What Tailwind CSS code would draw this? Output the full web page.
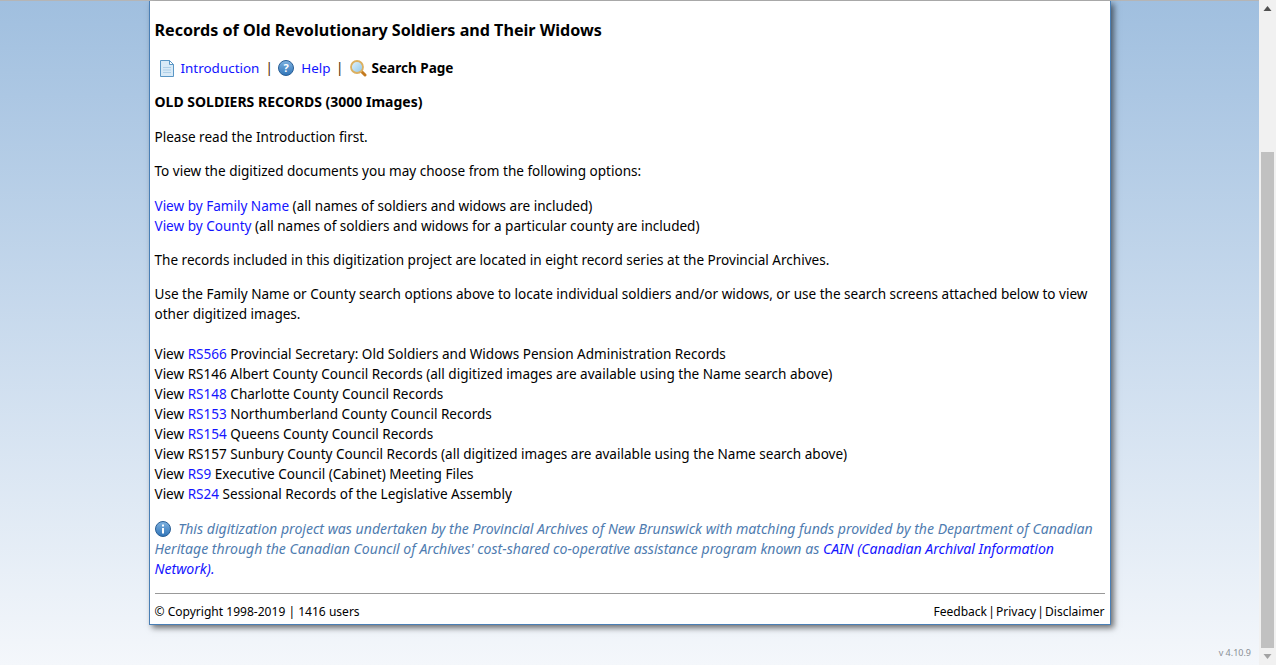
<!DOCTYPE html>
<html lang="en">
<head>
  <meta charset="UTF-8" />
  <title>Old Soldiers Records</title>
  <script src="https://cdn.jsdelivr.net/npm/@tailwindcss/browser@4"></script>
</head>
<body class="h-[665px] overflow-hidden flex bg-gradient-to-b from-[#a0bfdf] to-[#f4f7fb] font-['Noto_Sans',sans-serif] text-[13.56px] leading-5 text-black">
  <svg class="absolute w-0 h-0">
    <defs>
      <linearGradient id="ball" x1="0" y1="0" x2="0" y2="1">
        <stop offset="0" stop-color="#7fb2e0" />
        <stop offset="1" stop-color="#2f74b8" />
      </linearGradient>
      <linearGradient id="lens" x1="0" y1="0" x2="1" y2="1">
        <stop offset="0" stop-color="#e4f3fb" />
        <stop offset="1" stop-color="#8cc6ea" />
      </linearGradient>
    </defs>
  </svg>
  <main class="relative flex-1 flex justify-center items-start border-t border-[#b5b5b5]">
    <div class="w-[962px] h-[624px] bg-white border border-t-0 border-[#4a7fb5] shadow-[3px_3px_6px_rgba(0,0,0,0.55)] px-[5px]">
      <h1 class="mt-[19px] mb-[18px] text-[16.13px] leading-5 font-bold">Records of Old Revolutionary Soldiers and Their Widows</h1>

      <nav class="flex items-center h-5 mb-[14px] ml-[5px] text-[13.45px]">
        <svg class="w-[14px] h-[17px] mr-[7px]" viewBox="0 0 14 17">
          <path d="M.5 .5h9l4 4v12H.5z" fill="#d8eaf7" stroke="#5a97c6" />
          <path d="M9.5 .5v4h4z" fill="#fff" stroke="#5a97c6" />
          <path d="M3 7.5h8M3 10h8M3 12.5h8" stroke="#aecfe8" />
        </svg>
        <a href="#" class="text-[#1414ff]">Introduction</a>
        <span class="ml-[6px] mr-[5.5px] font-medium text-[#5a3a10]">|</span>
        <svg class="w-[16px] h-[16px] mr-[7px]" viewBox="0 0 16 16">
          <circle cx="8" cy="8" r="7.5" fill="url(#ball)" stroke="#2a5f96" />
          <text x="8" y="12" text-anchor="middle" font-size="11" font-weight="700" fill="#fff">?</text>
        </svg>
        <a href="#" class="text-[#1414ff]">Help</a>
        <span class="ml-[5.5px] mr-[6px] font-medium text-[#5a3a10]">|</span>
        <svg class="w-[17px] h-[17px] mr-[5px]" viewBox="0 0 17 17">
          <path d="M11.5 11.5l3.5 3.5" stroke="#c47a1e" stroke-width="3" stroke-linecap="round" />
          <circle cx="7" cy="7" r="6" fill="url(#lens)" stroke="#dcb060" stroke-width="1.8" />
        </svg>
        <b class="text-[13.56px]">Search Page</b>
      </nav>

      <p class="mb-[14.5px] text-[14px] font-bold">OLD SOLDIERS RECORDS (3000 Images)</p>
      <p class="mb-[14.5px]">Please read the Introduction first.</p>
      <p class="mb-[14.5px]">To view the digitized documents you may choose from the following options:</p>
      <p class="mb-[14.5px]">
        <a href="#" class="text-[#1414ff]">View by Family Name</a> (all names of soldiers and widows are included)<br />
        <a href="#" class="text-[#1414ff]">View by County</a> (all names of soldiers and widows for a particular county are included)
      </p>
      <p class="mb-[14px]">The records included in this digitization project are located in eight record series at the Provincial Archives.</p>
      <p class="mb-[20px]">Use the Family Name or County search options above to locate individual soldiers and/or widows, or use the search screens attached below to view other digitized images.</p>
      <p class="mb-[15px]">
        View <a href="#" class="text-[#1414ff]">RS566</a> Provincial Secretary: Old Soldiers and Widows Pension Administration Records<br />
        View RS146 Albert County Council Records (all digitized images are available using the Name search above)<br />
        View <a href="#" class="text-[#1414ff]">RS148</a> Charlotte County Council Records<br />
        View <a href="#" class="text-[#1414ff]">RS153</a> Northumberland County Council Records<br />
        View <a href="#" class="text-[#1414ff]">RS154</a> Queens County Council Records<br />
        View RS157 Sunbury County Council Records (all digitized images are available using the Name search above)<br />
        View <a href="#" class="text-[#1414ff]">RS9</a> Executive Council (Cabinet) Meeting Files<br />
        View <a href="#" class="text-[#1414ff]">RS24</a> Sessional Records of the Legislative Assembly
      </p>
      <p class="italic text-[14.08px] text-[#4f7cb0]">
        <svg class="inline-block w-[16px] h-[16px] mr-[4px] align-[-3px]" viewBox="0 0 16 16">
          <circle cx="8" cy="8" r="7.5" fill="url(#ball)" stroke="#2a5f96" />
          <path d="M8 3.5v2M8 7v5.5" stroke="#fff" stroke-width="2" />
        </svg>
        This digitization project was undertaken by the Provincial Archives of New Brunswick with matching funds provided by the Department of Canadian Heritage through the Canadian Council of Archives' cost-shared co-operative assistance program known as <a href="#" class="text-[#1414ff]">CAIN (Canadian Archival Information Network).</a>
      </p>
      <hr class="mt-[14px] border-0 border-t border-[#999]" />
      <footer class="flex justify-between mt-[7.5px] text-[12.05px]">
        <span>© Copyright 1998-2019 | 1416 users</span>
        <span class="[word-spacing:-2px]">Feedback | Privacy | Disclaimer</span>
      </footer>
    </div>
    <span class="absolute right-[8px] bottom-[2px] text-[9px] text-[#8a8f96]">v 4.10.9</span>
  </main>

  <aside class="w-[17px] h-full bg-[#f1f1f1] flex flex-col items-center justify-between">
    <svg class="w-[17px] h-[17px] shrink-0" viewBox="0 0 17 17"><path d="M8.5 6l4 5h-8z" fill="#505050" /></svg>
    <div class="w-[13px] flex-1 mt-[135px] bg-[#c1c1c1]"></div>
    <svg class="w-[17px] h-[17px] shrink-0" viewBox="0 0 17 17"><path d="M8.5 11l4-5h-8z" fill="#a3a3a3" /></svg>
  </aside>
</body>
</html>
